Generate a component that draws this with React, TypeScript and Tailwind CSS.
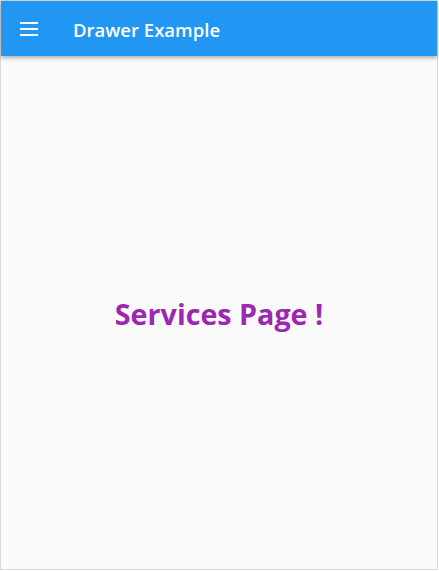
const App = () => {
  return (
    <div className="w-[439px] h-[571px] bg-white">
      <div
        className="w-[438px] h-[570px] border border-[#d9d9d9] bg-[#fafafa] flex flex-col"
        style={{ fontFamily: '"Segoe UI", "Open Sans", "Noto Sans", sans-serif' }}
      >
        <header className="h-[55px] bg-[#2196f3] flex items-center pl-[19px] shadow-[0_2px_4px_rgba(0,0,0,0.3)] z-10">
          <button className="w-[18px] h-[14px] flex flex-col justify-between">
            <span className="block h-[2px] w-full bg-white" />
            <span className="block h-[2px] w-full bg-white" />
            <span className="block h-[2px] w-full bg-white" />
          </button>
          <h1 className="ml-[35px] mt-[3px] text-white text-[18.5px] font-semibold">Drawer Example</h1>
        </header>
        <main className="flex-1 flex items-center justify-center pt-[2px]">
          <h2 className="text-[#9c27b0] text-[28.7px] font-bold">Services Page !</h2>
        </main>
      </div>
    </div>
  );
};

export default App;
